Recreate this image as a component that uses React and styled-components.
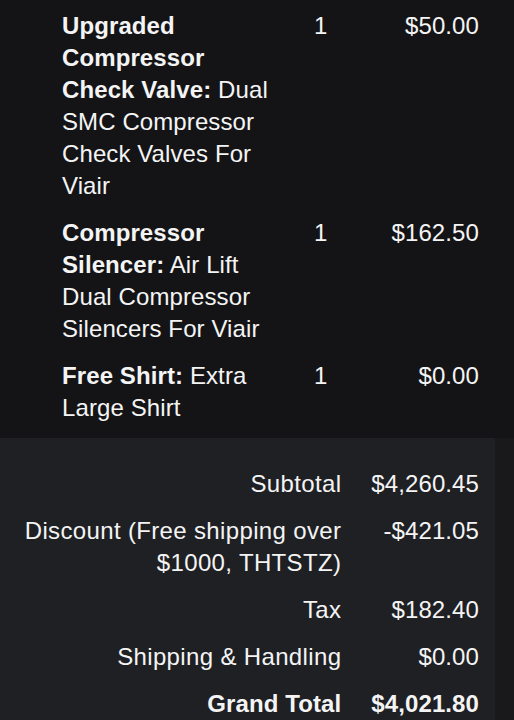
import React from "react";
import styled, { createGlobalStyle } from "styled-components";

const Global = createGlobalStyle`
  html, body { margin: 0; padding: 0; background: #141416; }
  body { font-family: "Liberation Sans", Arial, Helvetica, sans-serif; color: #f4f4f5; }
  * { box-sizing: border-box; }
`;

const Page = styled.div`
  width: 514px;
  height: 720px;
  overflow: hidden;
  background: #141416;
  font-size: 24px;
  line-height: 32px;
  letter-spacing: 0.1px;
`;

const Items = styled.div`
  display: flex;
  flex-direction: column;
  gap: 15px;
  padding: 10px 35px 14px 62px;
`;

const ItemRow = styled.div`
  display: grid;
  grid-template-columns: 214px auto 1fr;
  column-gap: 38px;
  align-items: start;
`;

const Name = styled.div`
  font-weight: 400;
`;

const Strong = styled.span`
  font-weight: 700;
`;

const Qty = styled.div``;

const Price = styled.div`
  text-align: right;
`;

const TotalsWrap = styled.div`
  background: #19191b;
  padding-right: 19px;
`;

const Panel = styled.div`
  background: #1f2023;
  padding: 30px 16px 20px 16px;
  display: grid;
  grid-template-columns: 1fr auto;
  column-gap: 30px;
  row-gap: 15px;
`;

const Label = styled.div`
  text-align: right;
  font-weight: ${(p) => (p.$bold ? 700 : 400)};
  letter-spacing: ${(p) => (p.$bold ? "0.1px" : "0.35px")};
`;

const Value = styled.div`
  text-align: right;
  min-width: 107px;
  font-weight: ${(p) => (p.$bold ? 700 : 400)};
`;

const items = [
  {
    title: "Upgraded Compressor Check Valve:",
    desc: "Dual SMC Compressor Check Valves For Viair",
    qty: 1,
    price: "$50.00",
  },
  {
    title: "Compressor Silencer:",
    desc: "Air Lift Dual Compressor Silencers For Viair",
    qty: 1,
    price: "$162.50",
  },
  {
    title: "Free Shirt:",
    desc: "Extra Large Shirt",
    qty: 1,
    price: "$0.00",
  },
];

const totals = [
  { label: "Subtotal", value: "$4,260.45" },
  { label: "Discount (Free shipping over $1000, THTSTZ)", value: "-$421.05" },
  { label: "Tax", value: "$182.40" },
  { label: "Shipping & Handling", value: "$0.00" },
  { label: "Grand Total", value: "$4,021.80", bold: true },
];

export default function App() {
  return (
    <>
      <Global />
      <Page>
        <Items>
          {items.map((it) => (
            <ItemRow key={it.title}>
              <Name>
                <Strong>{it.title}</Strong> {it.desc}
              </Name>
              <Qty>{it.qty}</Qty>
              <Price>{it.price}</Price>
            </ItemRow>
          ))}
        </Items>
        <TotalsWrap>
          <Panel>
            {totals.map((t) => (
              <React.Fragment key={t.label}>
                <Label $bold={t.bold}>{t.label}</Label>
                <Value $bold={t.bold}>{t.value}</Value>
              </React.Fragment>
            ))}
          </Panel>
        </TotalsWrap>
      </Page>
    </>
  );
}
